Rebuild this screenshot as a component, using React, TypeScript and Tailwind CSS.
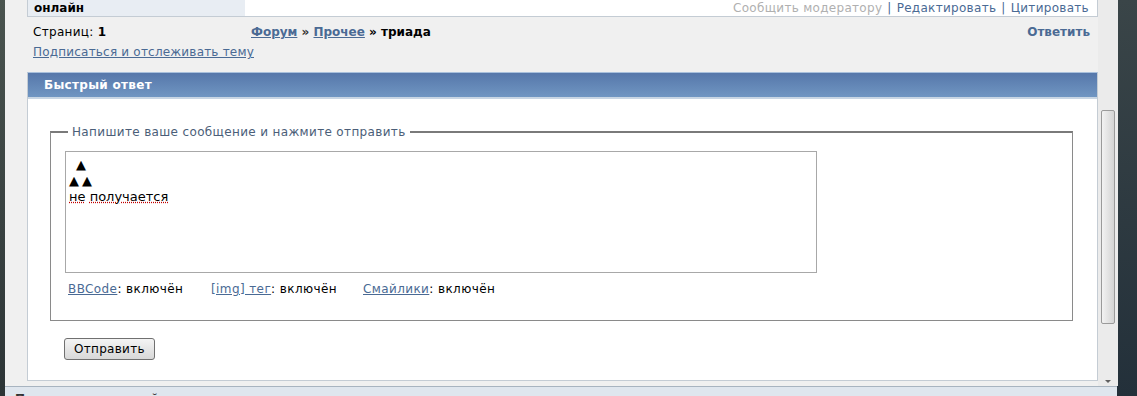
import React from "react";

const font = { fontFamily: '"DejaVu Sans", Verdana, sans-serif' };

export default function App() {
  return (
    <div
      className="flex h-[396px] w-[1137px] overflow-hidden bg-[#f0f0f0] text-[12px] text-black"
      style={font}
    >
      <div className="w-[5px] shrink-0 bg-gradient-to-b from-[#4a544f] to-[#2c3436]" />

      <div className="flex w-[1112px] shrink-0 flex-col">
        <div className="flex h-[386px] shrink-0">
          <div className="flex w-[1110px] flex-col">
            {/* post footer */}
            <div className="ml-[22px] flex h-[17px] w-[1071px] border-b border-r border-l border-[#c4ccd4] bg-white">
              <div className="flex h-full w-[217px] items-end bg-[#e8edf3] pl-[6px] pb-[2px] text-[12px] font-bold leading-none">
                онлайн
              </div>
              <div className="flex flex-1 items-end justify-end pb-[2px] pr-[8px] text-[12px] leading-none tracking-[0.3px]">
                <span className="text-[#b0b0b0]">Сообщить модератору</span>
                <span className="mx-[5px] text-[#4a6a94]">|</span>
                <span className="text-[#4a6a94]">Редактировать</span>
                <span className="mx-[5px] text-[#4a6a94]">|</span>
                <span className="text-[#4a6a94]">Цитировать</span>
              </div>
            </div>

            {/* pages + breadcrumb */}
            <div className="ml-[28px] mt-[8px] flex w-[1057px] items-center leading-[14px]">
              <div className="w-[218px] tracking-[0.3px]">
                Страниц: <b>1</b>
              </div>
              <div className="flex-1 font-bold">
                <a className="text-[#4a6a94] underline">Форум</a>
                <span className="text-[#333]"> » </span>
                <a className="text-[#4a6a94] underline">Прочее</a>
                <span> » триада</span>
              </div>
              <div className="font-bold text-[#4a6a94]">Ответить</div>
            </div>
            <a className="ml-[28px] mt-[6px] text-[#4a6a94] underline leading-[14px] tracking-[0.2px]">
              Подписаться и отслеживать тему
            </a>

            {/* quick reply */}
            <div className="ml-[22px] mt-[13px] flex h-[309px] w-[1071px] flex-col border border-[#c4ccd4] border-t-[#a9c0dc] bg-white">
              <div className="flex h-[24px] shrink-0 items-center bg-gradient-to-b from-[#5677aa] to-[#7096c2] pl-[16px] text-[12px] font-bold tracking-[0.3px] text-white">
                Быстрый ответ
              </div>
              <div className="h-[2px] bg-[#c8d6e4]" />

              <fieldset className="ml-[22px] mt-[24px] w-[1023px] border-t-2 border-r border-l border-b border-t-[#7a7a7a] border-r-[#8a8a8a] border-l-[#8a8a8a] border-b-[#8a8a8a] px-[14px] pb-[24px]">
                <legend className="ml-[3px] px-[4px] text-[12px] tracking-[0.35px] text-[#4b5e78]">
                  Напишите ваше сообщение и нажмите отправить
                </legend>
                <div className="mt-[10px] h-[122px] w-[752px] border border-[#a8a8a8] bg-white px-[3px] pt-[5px] text-[13px] leading-[16px]">
                  <div className="pl-[7px]">▲</div>
                  <div className="tracking-[3px]">▲▲</div>
                  <div>
                    <span className="underline decoration-dotted decoration-[#c00000]">не</span>{" "}
                    <span className="underline decoration-dotted decoration-[#c00000]">получается</span>
                  </div>
                </div>
                <div className="mt-[9px] flex pl-[3px] text-[12px] leading-[14px] tracking-[0.4px]">
                  <span className="w-[143px]">
                    <a className="text-[#4a6a94] underline">BBCode</a>: включён
                  </span>
                  <span className="w-[152px]">
                    <a className="text-[#4a6a94] underline">[img] тег</a>: включён
                  </span>
                  <span>
                    <a className="text-[#4a6a94] underline">Смайлики</a>: включён
                  </span>
                </div>
              </fieldset>

              <div className="ml-[36px] mt-[17px]">
                <button className="h-[22px] rounded-[3px] border border-[#707070] bg-gradient-to-b from-[#f4f4f4] to-[#d8d8d8] px-[9px] text-[12px] leading-none tracking-[0.3px]">
                  Отправить
                </button>
              </div>
            </div>
          </div>

          {/* scrollbar */}
          <div className="relative w-[20px] shrink-0 bg-[#ebebeb]">
            <div className="absolute left-[3px] top-[110px] h-[214px] w-[14px] rounded-[2px] border border-[#9a9a9a] bg-gradient-to-r from-[#f2f2f2] to-[#d4d4d4]" />
            <div className="absolute left-[7px] top-[380px] h-0 w-0 border-l-[3px] border-r-[3px] border-t-[3px] border-l-transparent border-r-transparent border-t-[#606060]" />
          </div>
        </div>

        <div className="h-[10px] overflow-hidden border-t border-[#a8b4c0] bg-[#dfe6ee] pl-[10px] pt-[3px] text-[12px] font-bold text-[#333]">
          Пользователи онлайн
        </div>
      </div>

      <div className="flex-1 bg-gradient-to-b from-[#3a4548] to-[#23303a]" />
    </div>
  );
}
